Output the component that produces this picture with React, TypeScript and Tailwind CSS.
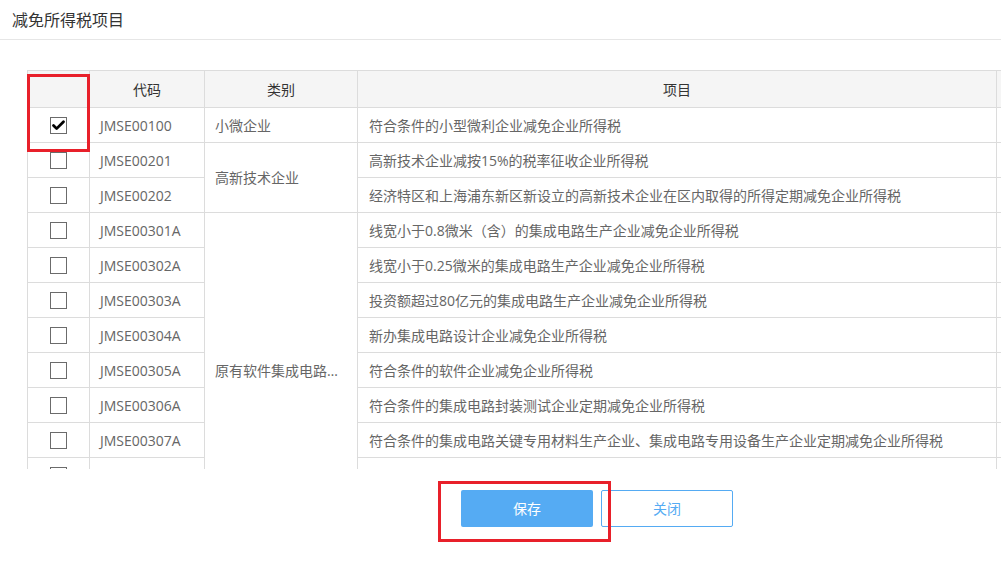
import { Check } from "lucide-react"

type Row = {
  code: string
  category?: string
  span?: number
  item: string
  checked?: boolean
}

const rows: Row[] = [
  { code: "JMSE00100", category: "小微企业", span: 1, item: "符合条件的小型微利企业减免企业所得税", checked: true },
  { code: "JMSE00201", category: "高新技术企业", span: 2, item: "高新技术企业减按15%的税率征收企业所得税" },
  { code: "JMSE00202", item: "经济特区和上海浦东新区新设立的高新技术企业在区内取得的所得定期减免企业所得税" },
  { code: "JMSE00301A", category: "原有软件集成电路企业", span: 9, item: "线宽小于0.8微米（含）的集成电路生产企业减免企业所得税" },
  { code: "JMSE00302A", item: "线宽小于0.25微米的集成电路生产企业减免企业所得税" },
  { code: "JMSE00303A", item: "投资额超过80亿元的集成电路生产企业减免企业所得税" },
  { code: "JMSE00304A", item: "新办集成电路设计企业减免企业所得税" },
  { code: "JMSE00305A", item: "符合条件的软件企业减免企业所得税" },
  { code: "JMSE00306A", item: "符合条件的集成电路封装测试企业定期减免企业所得税" },
  { code: "JMSE00307A", item: "符合条件的集成电路关键专用材料生产企业、集成电路专用设备生产企业定期减免企业所得税" },
  { code: "JMSE00308A", item: "国家规划布局内重点软件企业可减按10%的税率征收企业所得税" },
  { code: "JMSE00309A", item: "国家规划布局内重点集成电路设计企业可减按10%的税率征收企业所得税" },
]

const cellClass = "border border-[#dcdcdc] h-[35px] p-0"

function CheckBox({ checked }: { checked?: boolean }) {
  return (
    <span className="mx-auto flex h-[17px] w-[17px] items-center justify-center border border-[#6b6b6b] bg-white">
      {checked && <Check size={15} strokeWidth={4.5} className="text-black" />}
    </span>
  )
}

export default function App() {
  return (
    <div
      className="relative h-[578px] w-[1001px] overflow-hidden bg-white text-[14px] text-[#666]"
      style={{ fontFamily: '"Open Sans", "Noto Sans CJK SC", sans-serif' }}
    >
      <div className="flex h-[40px] items-center border-b border-[#e6e6e6] pl-[12px] text-[16px] text-[#333]">
        减免所得税项目
      </div>

      <div className="ml-[27px] mt-[30px] h-[399px] overflow-hidden">
        <table className="w-[1100px] table-fixed border-collapse">
          <colgroup>
            <col className="w-[62px]" />
            <col className="w-[115px]" />
            <col className="w-[153px]" />
            <col className="w-[639px]" />
            <col />
          </colgroup>
          <thead>
            <tr className="bg-[#f5f5f5] text-[#333]">
              <th className="h-[37px] border border-[#dcdcdc] font-normal" />
              <th className="h-[37px] border border-[#dcdcdc] font-normal">代码</th>
              <th className="h-[37px] border border-[#dcdcdc] font-normal">类别</th>
              <th className="h-[37px] border border-[#dcdcdc] font-normal">项目</th>
              <th className="h-[37px] border border-[#dcdcdc] font-normal" />
            </tr>
          </thead>
          <tbody>
            {rows.map((row) => (
              <tr key={row.code}>
                <td className={cellClass}>
                  <CheckBox checked={row.checked} />
                </td>
                <td className={`${cellClass} pl-[10px]`}>{row.code}</td>
                {row.category && (
                  <td
                    rowSpan={row.span}
                    className={`${cellClass} truncate px-[10px]`}
                  >
                    {row.category}
                  </td>
                )}
                <td className={`${cellClass} whitespace-nowrap pl-[11px]`}>{row.item}</td>
                <td className={cellClass} />
              </tr>
            ))}
          </tbody>
        </table>
      </div>

      <div className="ml-[461px] mt-[21px] flex gap-[8px]">
        <button className="h-[37px] w-[132px] rounded-[2px] bg-[#55abf3] text-white">保存</button>
        <button className="h-[37px] w-[132px] rounded-[2px] border border-[#55abf3] bg-white text-[#55abf3]">
          关闭
        </button>
      </div>

      <div className="pointer-events-none absolute left-[27px] top-[74px] h-[78px] w-[63px] border-[3px] border-[#e8202a]" />
      <div className="pointer-events-none absolute left-[438px] top-[481px] h-[61px] w-[173px] border-[3px] border-[#e8202a]" />
    </div>
  )
}
